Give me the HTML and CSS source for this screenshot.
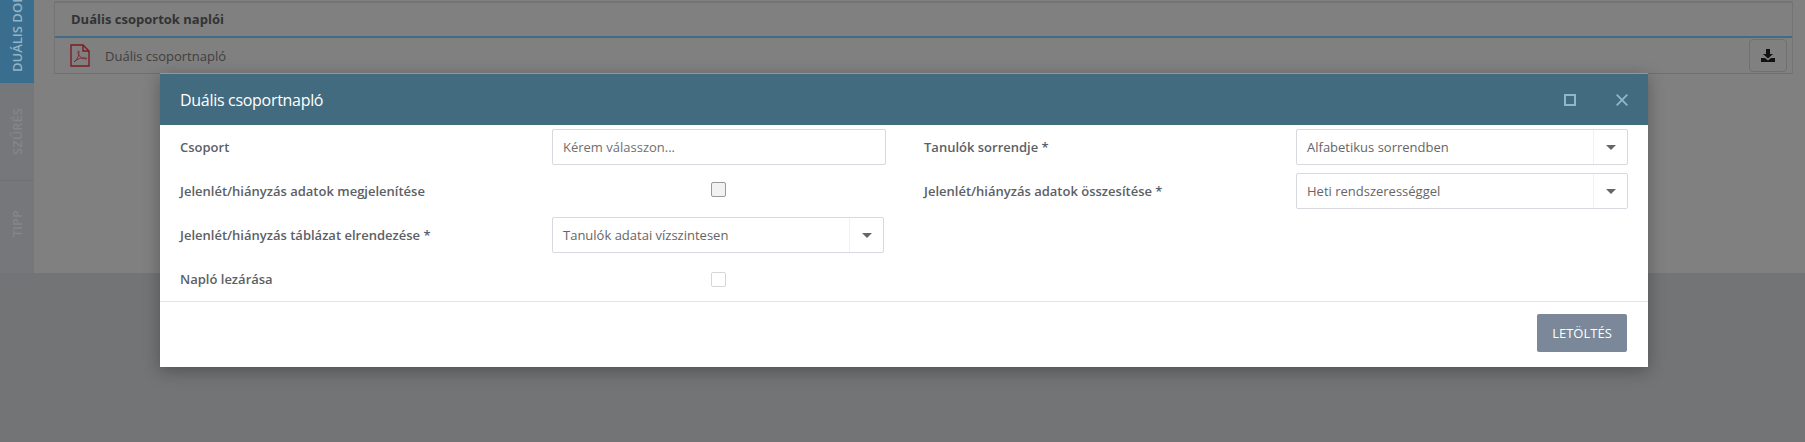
FILE: index.html
```html
<!DOCTYPE html>
<html lang="hu">
<head>
  <meta charset="UTF-8">
  <title>Duális csoportnapló</title>
  <link rel="stylesheet" href="styles.css">
</head>
<body>

<div class="page">
  <!-- Oldalsó fülek -->
  <div class="sidebar">
    <div class="tab tab-active"><span>DUÁLIS DOKUMENTUMOK</span></div>
    <div class="tab tab-filter"><span>SZŰRÉS</span></div>
    <div class="tab tab-tip"><span>TIPP</span></div>
  </div>

  <div class="main">
    <div class="panel">
      <div class="panel-head">Duális csoportok naplói</div>
      <div class="panel-row">
        <svg class="pdf-icon" viewBox="0 0 20 23" width="20" height="23">
          <path d="M1 1h12l6 6v15H1z M13 1v6h6" fill="none" stroke="#7d1d22" stroke-width="1.4"/>
          <path d="M4 18c3-2 5-6 5-10 0-2-1-1-1 0 0 4 4 7 8 7 1 0 1-1 0-1-4-1-9 1-12 4z" fill="none" stroke="#7d2a2e" stroke-width="0.9"/>
        </svg>
        <span class="row-name">Duális csoportnapló</span>
        <button class="row-download">
          <svg viewBox="0 0 14 13" width="14" height="13">
            <path d="M5 0h4v5h3L7 9.5 2 5h3z" fill="#111"/>
            <path d="M0 9h4l3 2.5L10 9h4v4H0z" fill="#111"/>
          </svg>
        </button>
      </div>
    </div>
  </div>
</div>

<div class="modal">
  <div class="modal-head">
    <div class="modal-title">Duális csoportnapló</div>
    <div class="modal-icon-max"></div>
    <svg class="modal-icon-close" viewBox="0 0 12 12" width="12" height="12">
      <path d="M.7.7l10.6 10.6M11.3.7L.7 11.3" stroke="#8fb6cc" stroke-width="1.8" fill="none"/>
    </svg>
  </div>

  <div class="modal-body">
    <div class="form-col form-col-left">
      <label class="field-label">Csoport</label>
      <input class="text-input" type="text" placeholder="Kérem válasszon...">

      <label class="field-label">Jelenlét/hiányzás adatok megjelenítése</label>
      <div class="check-cell"><div class="check check-dark"></div></div>

      <label class="field-label">Jelenlét/hiányzás táblázat elrendezése *</label>
      <div class="select select-short"><span class="select-value">Tanulók adatai vízszintesen</span><span class="select-arrow"></span></div>

      <label class="field-label">Napló lezárása</label>
      <div class="check-cell"><div class="check"></div></div>
    </div>

    <div class="form-col form-col-right">
      <label class="field-label">Tanulók sorrendje *</label>
      <div class="select"><span class="select-value">Alfabetikus sorrendben</span><span class="select-arrow"></span></div>

      <label class="field-label">Jelenlét/hiányzás adatok összesítése *</label>
      <div class="select"><span class="select-value">Heti rendszerességgel</span><span class="select-arrow"></span></div>
    </div>
  </div>

  <div class="modal-foot">
    <button class="btn-download">LETÖLTÉS</button>
  </div>
</div>

</body>
</html>
```

FILE: styles.css
```css
* { box-sizing: border-box; }
html, body {
  height: 100%;
}
body {
  margin: 0;
  overflow: hidden;
  font-family: "Open Sans", sans-serif;
  background-color: #737476;
}
.page {
  display: flex;
  height: 273px;
}
.sidebar {
  width: 34px;
  display: flex;
  flex-direction: column;
  background-color: #75777a;
}
.tab {
  display: flex;
  justify-content: center;
  align-items: flex-end;
  overflow: hidden;
  border-bottom: 1px solid #6f7173;
  font-size: 13px;
  font-weight: 600;
  color: #83868a;
}
.tab span {
  writing-mode: vertical-rl;
  transform: rotate(180deg);
  white-space: nowrap;
}
.tab-active {
  height: 83px;
  padding-bottom: 11px;
  background-color: #3a6e8e;
  color: #93b3c6;
  border-bottom: none;
}
.tab-filter {
  height: 98px;
  padding-bottom: 25px;
}
.tab-tip {
  flex: 1;
  padding-bottom: 36px;
  border-bottom: none;
}
.main {
  flex: 1;
  padding: 1px 12px 0 20px;
  background-color: #808080;
}
.panel {
  border: 1px solid #747474;
  border-bottom-color: #707070;
}
.panel-head {
  height: 36px;
  padding-left: 16px;
  border-bottom: 2px solid #3e6d85;
  border-top: 1px solid #747474;
  font-size: 13px;
  font-weight: 700;
  line-height: 32px;
  color: #333;
}
.panel-row {
  height: 35px;
  display: flex;
  align-items: center;
  padding: 0 5px 0 15px;
}
.pdf-icon {
  flex: none;
}
.row-name {
  flex: 1;
  margin-left: 15px;
  font-size: 13px;
  color: #3f3f3f;
}
.row-download {
  width: 38px;
  height: 33px;
  display: flex;
  align-items: center;
  justify-content: center;
  padding: 0;
  background-color: #808080;
  border: 1px solid #707070;
  border-radius: 4px;
}
.modal {
  position: absolute;
  left: 160px;
  top: 73px;
  width: 1488px;
  height: 294px;
  display: flex;
  flex-direction: column;
  background-color: #fff;
  box-shadow: 0 4px 16px rgba(0, 0, 0, 0.3);
}
.modal-head {
  height: 52px;
  display: flex;
  align-items: center;
  padding: 0 20px;
  background-color: #436b80;
  border-top: 1px solid #7f9dae;
}
.modal-title {
  flex: 1;
  font-size: 16px;
  letter-spacing: -0.3px;
  color: #fff;
}
.modal-icon-max {
  width: 12px;
  height: 12px;
  margin-right: 40px;
  border: 2px solid #8fb6cc;
}
.modal-icon-close {
  display: block;
}
.modal-body {
  height: 176px;
  display: flex;
  gap: 38px;
  padding: 4px 20px;
}
.form-col {
  display: grid;
  grid-auto-rows: 36px;
  row-gap: 8px;
  align-items: center;
}
.form-col-left {
  grid-template-columns: 372px 334px;
}
.form-col-right {
  grid-template-columns: 372px 332px;
  align-content: start;
}
.field-label {
  font-size: 13px;
  font-weight: 600;
  color: #5c5f66;
}
.text-input {
  width: 100%;
  height: 36px;
  padding: 0 10px;
  border: 1px solid #d6d9de;
  border-radius: 2px;
  outline: none;
  font-family: inherit;
  font-size: 13px;
  color: #666;
}
.text-input::placeholder {
  color: #6f6f6f;
  opacity: 1;
}
.check-cell {
  display: flex;
  justify-content: center;
}
.check {
  width: 15px;
  height: 15px;
  margin-right: 1px;
  background-color: #fff;
  border: 1px solid #d4d6da;
  border-radius: 2px;
}
.check-dark {
  margin-top: -3px;
  background-color: #f2f2f2;
  border-color: #9a9a9a;
}
.select {
  width: 100%;
  height: 36px;
  display: flex;
  align-items: center;
  border: 1px solid #d6d9de;
  border-radius: 2px;
  font-size: 13px;
  color: #666;
}
.select-short {
  width: 332px;
}
.select-value {
  flex: 1;
  padding-left: 10px;
}
.select-arrow {
  width: 34px;
  height: 100%;
  display: flex;
  align-items: center;
  justify-content: center;
  border-left: 1px solid #f0f1f3;
}
.select-arrow::after {
  content: "";
  border-top: 5px solid #666;
  border-left: 5px solid transparent;
  border-right: 5px solid transparent;
}
.modal-foot {
  flex: 1;
  display: flex;
  justify-content: flex-end;
  align-items: flex-start;
  padding: 12px 21px 0 0;
  border-top: 1px solid #e4e4e4;
}
.btn-download {
  width: 90px;
  height: 38px;
  background-color: #7a8899;
  border: none;
  border-radius: 2px;
  font-family: inherit;
  font-size: 13px;
  color: #fff;
}
```
